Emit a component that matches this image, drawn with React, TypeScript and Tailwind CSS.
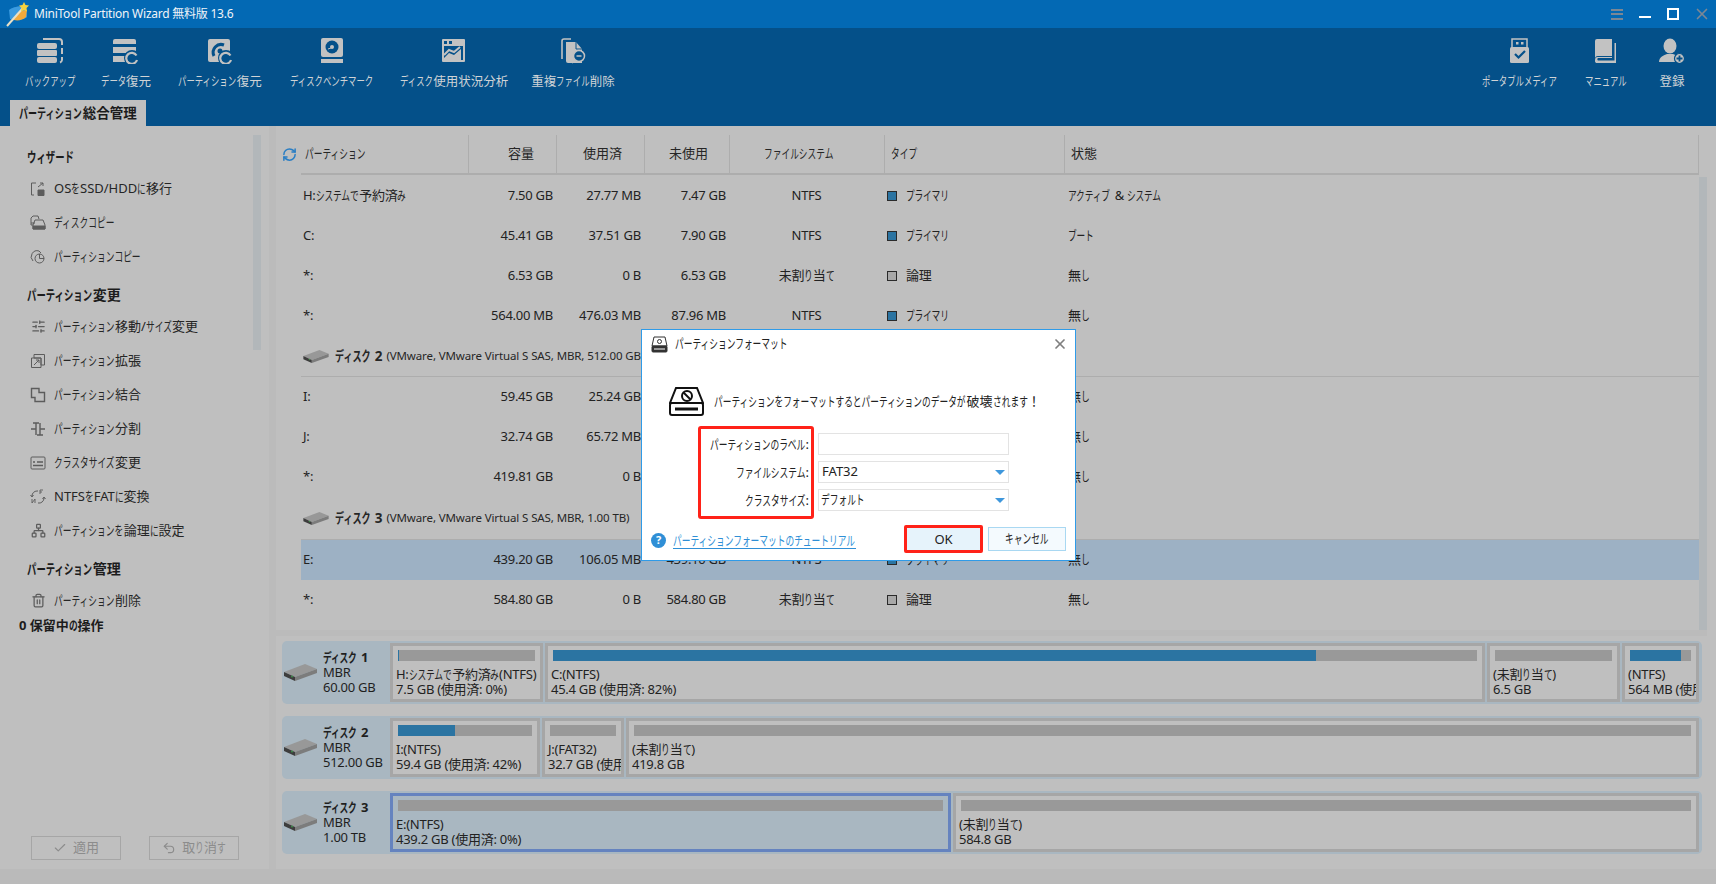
import { RefreshCw, SlidersHorizontal, Trash2, Network, Check, Undo2, X } from "lucide-react";

const cols = "grid grid-cols-[165px_88px_88px_85px_155px_180px_1fr]";

type Row = {
  name: string;
  cap: string;
  used: string;
  free: string;
  fs: string;
  type: string;
  state: string;
  selected?: boolean;
};

const rowsA: Row[] = [
  { name: "H:システムで予約済み", cap: "7.50 GB", used: "27.77 MB", free: "7.47 GB", fs: "NTFS", type: "プライマリ", state: "アクティブ & システム" },
  { name: "C:", cap: "45.41 GB", used: "37.51 GB", free: "7.90 GB", fs: "NTFS", type: "プライマリ", state: "ブート" },
  { name: "*:", cap: "6.53 GB", used: "0 B", free: "6.53 GB", fs: "未割り当て", type: "論理", state: "無し" },
  { name: "*:", cap: "564.00 MB", used: "476.03 MB", free: "87.96 MB", fs: "NTFS", type: "プライマリ", state: "無し" },
];

const rowsB: Row[] = [
  { name: "I:", cap: "59.45 GB", used: "25.24 GB", free: "34.21 GB", fs: "NTFS", type: "プライマリ", state: "無し" },
  { name: "J:", cap: "32.74 GB", used: "65.72 MB", free: "32.68 GB", fs: "FAT32", type: "プライマリ", state: "無し" },
  { name: "*:", cap: "419.81 GB", used: "0 B", free: "419.81 GB", fs: "未割り当て", type: "論理", state: "無し" },
];

const rowsC: Row[] = [
  { name: "E:", cap: "439.20 GB", used: "106.05 MB", free: "439.10 GB", fs: "NTFS", type: "プライマリ", state: "無し", selected: true },
  { name: "*:", cap: "584.80 GB", used: "0 B", free: "584.80 GB", fs: "未割り当て", type: "論理", state: "無し" },
];

const disks = [
  {
    name: "ディスク 1",
    size: "60.00 GB",
    cells: [
      { w: "w-[153px]", a: "H:システムで予約済み(NTFS)", b: "7.5 GB (使用済: 0%)", pct: 1 },
      { w: "w-[940px]", a: "C:(NTFS)", b: "45.4 GB (使用済: 82%)", pct: 82.6 },
      { w: "w-[133px]", a: "(未割り当て)", b: "6.5 GB", pct: 0 },
      { w: "w-[77px]", a: "(NTFS)", b: "564 MB (使用済: 84%)", pct: 84 },
    ],
  },
  {
    name: "ディスク 2",
    size: "512.00 GB",
    cells: [
      { w: "w-[150px]", a: "I:(NTFS)", b: "59.4 GB (使用済: 42%)", pct: 42.5 },
      { w: "w-[82px]", a: "J:(FAT32)", b: "32.7 GB (使用済: 0%)", pct: 0 },
      { w: "w-[1073px]", a: "(未割り当て)", b: "419.8 GB", pct: 0 },
    ],
  },
  {
    name: "ディスク 3",
    size: "1.00 TB",
    cells: [
      { w: "w-[561px]", a: "E:(NTFS)", b: "439.2 GB (使用済: 0%)", pct: 0, selected: true },
      { w: "w-[746px]", a: "(未割り当て)", b: "584.8 GB", pct: 0 },
    ],
  },
];

// the original UI font has narrow kana, so kana runs get squeezed to 2/3 width
function T({ s }: { s: string }) {
  return (
    <>
      {s.split(/([\u3040-\u30ff]+)/).map((run, i) =>
        i % 2 === 1 ? (
          <span
            key={i}
            className="inline-block origin-left scale-x-[0.67] whitespace-nowrap"
            style={{ width: `${run.length * 0.67}em` }}
          >
            {run}
          </span>
        ) : (
          run
        ),
      )}
    </>
  );
}

function Logo() {
  return (
    <svg width="24" height="25" viewBox="0 0 24 25">
      <path d="M3 8c3-3 12-5 17-3l1 10c-3 3-13 4-17 2z" fill="#3b9be0" />
      <path d="M8 16c2-5 8-8 13-8l-1 7c-3 3-8 4-12 3z" fill="#f3a93b" />
      <path d="M1 24L17 6" stroke="#e8e0c8" strokeWidth="2" />
      <path d="M18 0l1.500 3 3.500.5-2.500 2.500.5 3.500-3-1.500-3 1.500.5-3.500L13 3.500l3.500-.5z" fill="#f5d33f" />
    </svg>
  );
}

const g = "#c2c2c2";
const bgc = "#045089";

function BackupIcon() {
  return (
    <svg width="26" height="26" viewBox="0 0 26 26" fill={g}>
      <rect x="0" y="5" width="20" height="6" rx="2" />
      <rect x="0" y="12" width="20" height="6" rx="1" />
      <rect x="0" y="19" width="20" height="6" rx="2" />
      <path d="M6 1h16a3 3 0 0 1 3 3v3M25 10v6M25 19v3a3 3 0 0 1-2 2.500" fill="none" stroke={g} strokeWidth="2" />
    </svg>
  );
}

function RecoverC({ x, y }: { x: number; y: number }) {
  return (
    <g transform={`translate(${x} ${y})`}>
      <circle cx="6" cy="6" r="8" fill={bgc} />
      <path d="M10.500 3.500A5.500 5.500 0 1 0 11 8" fill="none" stroke={g} strokeWidth="2.200" />
    </g>
  );
}

function DataIcon() {
  return (
    <svg width="26" height="26" viewBox="0 0 26 26" fill={g}>
      <path d="M2 1h19a2 2 0 0 1 2 2v3H0V3a2 2 0 0 1 2-2z" />
      <rect x="0" y="9" width="23" height="6" />
      <path d="M0 18h12v6H0z" />
      <RecoverC x={13} y={14} />
    </svg>
  );
}

function PartRecoverIcon() {
  return (
    <svg width="26" height="26" viewBox="0 0 26 26">
      <rect x="1" y="1" width="22" height="23" rx="2" fill={g} />
      <path d="M7 18a8 8 0 0 1 10-11" fill="none" stroke={bgc} strokeWidth="3" />
      <circle cx="13" cy="13" r="2.500" fill={bgc} />
      <RecoverC x={13} y={14} />
    </svg>
  );
}

function BenchIcon() {
  return (
    <svg width="26" height="26" viewBox="0 0 26 26">
      <rect x="2" y="0" width="22" height="19" rx="2" fill={g} />
      <circle cx="13" cy="9" r="6.500" fill={bgc} />
      <circle cx="13" cy="9" r="2" fill={g} />
      <path d="M9 11l3-1" stroke={g} />
      <rect x="2" y="21" width="22" height="4" fill={g} />
    </svg>
  );
}

function UsageIcon() {
  return (
    <svg width="26" height="26" viewBox="0 0 26 26">
      <rect x="1" y="1" width="23" height="23" rx="1" fill={g} />
      <rect x="3" y="3" width="3" height="3" fill={bgc} />
      <rect x="8" y="3" width="3" height="3" fill={bgc} />
      <rect x="3" y="8" width="19" height="14" fill={bgc} />
      <path d="M3 20l5-5 5 2 7-6v11H3z" fill={g} />
      <path d="M3 17l5-5 5 2 6-5" fill="none" stroke={g} strokeWidth="2" />
    </svg>
  );
}

function DupIcon() {
  return (
    <svg width="26" height="26" viewBox="0 0 26 26">
      <path d="M2 21V3a2 2 0 0 1 2-2h7" fill="none" stroke={g} strokeWidth="1.600" />
      <path d="M6 4h10l6 7v14H8a2 2 0 0 1-2-2z" fill={g} />
      <path d="M16 4v7h6" fill="none" stroke={bgc} />
      <circle cx="19" cy="18" r="5.500" fill={bgc} stroke={g} strokeWidth="1.500" />
      <path d="M16.500 18h5M15 22l-3 3" stroke={g} strokeWidth="1.500" />
    </svg>
  );
}

function UsbIcon() {
  return (
    <svg width="26" height="26" viewBox="0 0 26 26">
      <rect x="5" y="1" width="15" height="10" fill="none" stroke={g} strokeWidth="1.500" />
      <rect x="9" y="4" width="2.500" height="2.500" fill={g} />
      <rect x="14" y="4" width="2.500" height="2.500" fill={g} />
      <rect x="3" y="9" width="19" height="16" rx="1.500" fill={g} />
      <path d="M8 16l3.500 3.500L18 13" fill="none" stroke={bgc} strokeWidth="2.200" />
    </svg>
  );
}

function BookIcon() {
  return (
    <svg width="26" height="26" viewBox="0 0 26 26">
      <path d="M2 20V3a2 2 0 0 1 2-2h15v17H5a3 3 0 0 0-3 2z" fill={g} />
      <path d="M3 25h20V5h-1.500v17.500H5a1.500 1.500 0 0 1 0-2.500h14v-1H4a3 3 0 0 0-2 3 3 3 0 0 0 1 3z" fill={g} />
    </svg>
  );
}

function UserIcon() {
  return (
    <svg width="26" height="26" viewBox="0 0 26 26">
      <ellipse cx="11" cy="8" rx="6.500" ry="7.500" fill={g} />
      <path d="M0 24c0-5 5-7 8-8h6c3 1 8 3 8 8z" fill={g} />
      <circle cx="20.500" cy="20.500" r="5" fill={g} stroke={bgc} strokeWidth="1.200" />
      <path d="M17.500 20.500h6M20.500 17.500v6" stroke={bgc} strokeWidth="1.800" />
    </svg>
  );
}

function DriveIcon({ w = 33, h = 17 }: { w?: number; h?: number }) {
  return (
    <svg className="shrink-0" width={w} height={h} viewBox="0 0 33 17">
      <path d="M0 8L21 0l12 5L11 13z" fill="#989898" />
      <path d="M0 8l11 5v4L0 12z" fill="#3d3d3d" />
      <path d="M11 13l22-8v4L11 17z" fill="#7c7c7c" />
      <circle cx="8" cy="12.500" r="1" fill="#3f8d4a" />
    </svg>
  );
}

const ic = "#5c5c5c";

function MigrateIcon() {
  return (
    <svg width="16" height="16" viewBox="0 0 16 16" fill="none" stroke={ic}>
      <path d="M6 2H1.500v12H4" />
      <path d="M8 6l5-4M10 2h3v3" />
      <path d="M8 9h6v5.500H8z" fill={ic} />
    </svg>
  );
}
function DiskCopyIcon() {
  return (
    <svg width="16" height="16" viewBox="0 0 16 16" fill="none" stroke={ic}>
      <path d="M1 8V3l2-2h5l1 3" />
      <path d="M3 10H1V8h4" />
      <path d="M5 5h8l2 5v4H3v-4z" />
      <path d="M3 11h12v3H3z" fill={ic} />
    </svg>
  );
}
function PartCopyIcon() {
  return (
    <svg width="16" height="16" viewBox="0 0 16 16" fill="none" stroke={ic}>
      <path d="M3 12A6 6 0 0 1 9 2l2 2" />
      <circle cx="9.500" cy="9.500" r="4.500" />
      <path d="M9.500 5v4.500H14" />
    </svg>
  );
}
function ExtendIcon() {
  return (
    <svg width="16" height="16" viewBox="0 0 16 16" fill="none" stroke={ic}>
      <path d="M4 1.500h10.500V12H11V5H4z" />
      <path d="M1.500 5H11v9.500H1.500z" />
      <path d="M4 12l5-5M6 7h3v3" />
    </svg>
  );
}
function MergeIcon() {
  return (
    <svg width="16" height="16" viewBox="0 0 16 16" fill="none" stroke={ic} strokeWidth="1.400">
      <path d="M1.500 1.500H9v4h5.500v9H5v-4H1.500z" />
    </svg>
  );
}
function SplitIcon() {
  return (
    <svg width="16" height="16" viewBox="0 0 16 16" fill="none" stroke={ic} strokeWidth="1.400">
      <path d="M6 2v12M10 2v12M1 8h5M10 8h5M3 2h6M7 14h6" />
    </svg>
  );
}
function ClusterIcon() {
  return (
    <svg width="16" height="16" viewBox="0 0 16 16" fill="none" stroke={ic}>
      <rect x="1" y="2" width="14" height="12" rx="1" />
      <path d="M3 10.500h10M7 7h6M3 7l2 0" strokeWidth="1.300" />
    </svg>
  );
}
function ConvertIcon() {
  return (
    <svg width="16" height="16" viewBox="0 0 16 16" fill="none" stroke={ic}>
      <path d="M2 7a5 5 0 0 1 5-5h1M8 14a5 5 0 0 0 6-5" />
      <path d="M0.500 6L2 8l1.500-2M12.500 10L14 8l1.500 2" />
      <path d="M10 1v4M10 1h3M10 3h2M2 10v4l3-4v4" strokeWidth="0.900" />
    </svg>
  );
}

function Item({ icon, label }: { icon: React.ReactNode; label: string }) {
  return (
    <div className="flex h-[34px] items-center pt-[1px] pl-[30px]">
      <span className="flex w-[16px] justify-center">{icon}</span>
      <span className="ml-[8px] text-[13px] whitespace-nowrap text-[#262626]">
        <T s={label} />
      </span>
    </div>
  );
}

function Head({ label }: { label: string }) {
  return (
    <div className="flex h-[28px] items-center pb-[1px] pl-[27px] text-[14px] font-bold text-[#1c1c1c]">
      <span>
        <T s={label} />
      </span>
    </div>
  );
}

function TableRow({ r }: { r: Row }) {
  return (
    <div className={`${cols} h-[40px] items-center pl-[2px] text-[13px] tracking-[-0.02em] text-[#222222] ${r.selected ? "bg-[#9db1c4]" : ""}`}>
      <div className="whitespace-nowrap">
        <T s={r.name} />
      </div>
      <div className="pr-[3px] text-right">{r.cap}</div>
      <div className="pr-[3px] text-right">{r.used}</div>
      <div className="pr-[3px] text-right">{r.free}</div>
      <div className="text-center">
        <T s={r.fs} />
      </div>
      <div className="flex items-center pl-[3px]">
        <span className={`h-[10px] w-[10px] border border-[#2a2a2a] ${r.type === "論理" ? "bg-[#a8a8a8]" : "bg-[#2b74a2]"}`} />
        <span className="ml-[9px]">
          <T s={r.type} />
        </span>
      </div>
      <div className="pl-[4px]">
        <T s={r.state} />
      </div>
    </div>
  );
}

function DiskRow({ d }: { d: (typeof disks)[number] }) {
  return (
    <div className="flex h-[63px] w-[1420px] rounded-[5px] bg-[#a9b7c1]">
      <div className="flex w-[108px] items-center pl-[2px]">
        <DriveIcon />
        <div className="ml-[6px] text-[13px] leading-[15px] tracking-[-0.02em] text-[#1f1f1f]">
          <div className="font-bold">
            <T s={d.name} />
          </div>
          <div>MBR</div>
          <div>{d.size}</div>
        </div>
      </div>
      <div className="flex gap-[2px] py-[2px]">
        {d.cells.map((c) => (
          <div
            key={c.a}
            className={`${c.w} overflow-hidden border-[3px] ${c.selected ? "border-[#6583bf] bg-[#a9b7c1]" : "border-[#a6a6a6] bg-[#bfbfbf]"}`}
          >
            <div className="mx-[5px] mt-[4px] h-[11px] bg-[#999999]">
              <div className="h-full bg-[#2b74a2]" style={{ width: `${c.pct}%` }} />
            </div>
            <div className="mt-[6px] pl-[3px] text-[13px] leading-[15px] tracking-[-0.02em] whitespace-nowrap text-[#222222]">
              <div>
                <T s={c.a} />
              </div>
              <div>{c.b}</div>
            </div>
          </div>
        ))}
      </div>
    </div>
  );
}

function Dialog() {
  return (
    <div className="absolute top-[329px] left-[641px] h-[232px] w-[435px] border border-[#2f9be8] bg-white text-[13px] text-[#222222]">
      <div className="flex h-[28px] items-center pr-[7px] pl-[9px]">
        <svg width="17" height="17" viewBox="0 0 17 17" fill="none" stroke="#333">
          <path d="M3 1h11l2 9H1z" />
          <circle cx="8.500" cy="5.500" r="2" />
          <rect x="1" y="10" width="15" height="6" rx="1" fill="#333" />
          <path d="M3 13h11" stroke="#fff" />
        </svg>
        <span className="ml-[7px]">
          <T s="パーティションフォーマット" />
        </span>
        <X className="ml-auto text-[#7f7f7f]" size={16} strokeWidth={2.6} />
      </div>
      <div className="mt-[29px] flex h-[29px] items-center pl-[27px]">
        <svg className="shrink-0" width="35" height="29" viewBox="0 0 35 29" fill="none" stroke="#111" strokeWidth="2">
          <path d="M7 1h21l6 15H1z" fill="#fff" />
          <rect x="1" y="16" width="33" height="12" rx="2" fill="#fff" />
          <path d="M6 22h23" strokeWidth="3" />
          <circle cx="18" cy="9" r="5" />
          <path d="M14.500 5.500l7 7" />
        </svg>
        <span className="ml-[10px] whitespace-nowrap">
          <T s="パーティションをフォーマットするとパーティションのデータが破壊されます！" />
        </span>
      </div>
      <div className="mt-[10px] ml-[56px] flex">
        <div className="flex h-[93px] w-[116px] flex-col items-end rounded-[3px] border-[3px] border-[#ff2218] pt-[2px] pr-[2px]">
          <div className="flex h-[28px] items-center whitespace-nowrap">
            <span>
              <T s="パーティションのラベル:" />
            </span>
          </div>
          <div className="flex h-[28px] items-center whitespace-nowrap">
            <span>
              <T s="ファイルシステム:" />
            </span>
          </div>
          <div className="flex h-[28px] items-center whitespace-nowrap">
            <span>
              <T s="クラスタサイズ:" />
            </span>
          </div>
        </div>
        <div className="ml-[4px] flex flex-col gap-[6px] pt-[7px]">
          <div className="h-[22px] w-[191px] border border-[#e3e3e3]" />
          <div className="flex h-[22px] w-[191px] items-center border border-[#e3e3e3] pr-[3px] pl-[3px]">
            FAT32
            <span className="mt-[1px] ml-auto h-0 w-0 border-x-[5px] border-t-[5px] border-x-transparent border-t-[#3f97dc]" />
          </div>
          <div className="flex h-[22px] w-[191px] items-center border border-[#e3e3e3] pr-[3px] pl-[2px]">
            <span>
              <T s="デフォルト" />
            </span>
            <span className="mt-[1px] ml-auto h-0 w-0 border-x-[5px] border-t-[5px] border-x-transparent border-t-[#3f97dc]" />
          </div>
        </div>
      </div>
      <div className="mt-[6px] flex h-[28px] items-center pl-[9px]">
        <span className="mt-[2px] flex h-[15px] w-[15px] items-center justify-center rounded-full bg-[#2f8fd6] text-[11px] font-bold text-white">?</span>
        <span className="mt-[2px] ml-[7px] border-b border-[#2f8fd6] leading-[16px] whitespace-nowrap text-[#2f8fd6]">
          <T s="パーティションフォーマットのチュートリアル" />
        </span>
        <div className="ml-auto flex h-[28px] w-[79px] items-center justify-center rounded-[2px] border-[3px] border-[#ff2218] bg-[#e6f3fb] pt-[1px]">OK</div>
        <div className="mr-[9px] ml-[5px] flex h-[24px] w-[78px] items-center justify-center border border-[#a9d8f2] bg-[#f4fafe]">
          <span>
            <T s="キャンセル" />
          </span>
        </div>
      </div>
    </div>
  );
}

function ToolItem({ w, icon, label }: { w: string; icon: React.ReactNode; label: string }) {
  return (
    <div className={`${w} flex flex-col items-center pt-[10px]`}>
      <div className="flex h-[26px] items-center justify-center">{icon}</div>
      <div className="mt-[8px] h-[20px] text-[12.5px] leading-[20px] whitespace-nowrap text-[#cfd3d6]">
        <T s={label} />
      </div>
    </div>
  );
}

export default function App() {
  return (
    <div className="relative flex h-[884px] w-[1716px] flex-col overflow-hidden bg-[#bfbfbf] font-['Noto_Sans','Noto_Sans_CJK_JP',sans-serif]">
      {/* title bar */}
      <div className="flex h-[28px] items-center bg-[#0369b4] pl-[6px] text-[#f0f4f8]">
        <Logo />
        <span className="ml-[4px] text-[12px] tracking-[-0.02em]">MiniTool Partition Wizard 無料版 13.6</span>
        <div className="ml-auto flex items-center pr-[5px]">
          <span className="flex h-[11px] w-[12px] flex-col justify-between">
            <span className="h-[2px] bg-[#7b8794]" />
            <span className="h-[2px] bg-[#7b8794]" />
            <span className="h-[2px] bg-[#7b8794]" />
          </span>
          <span className="mt-[6px] ml-[16px] h-[2px] w-[12px] bg-white" />
          <span className="ml-[16px] h-[12px] w-[12px] border-2 border-white" />
          <X className="ml-[14px] text-[#7b8794]" size={18} strokeWidth={2.2} />
        </div>
      </div>

      {/* toolbar */}
      <div className="flex h-[98px] flex-col bg-[#045089]">
        <div className="flex h-[72px] pl-[10px]">
          <ToolItem w="w-[80px]" icon={<BackupIcon />} label="バックアップ" />
          <ToolItem w="w-[72px]" icon={<DataIcon />} label="データ復元" />
          <ToolItem w="w-[116px]" icon={<PartRecoverIcon />} label="パーティション復元" />
          <ToolItem w="w-[108px]" icon={<BenchIcon />} label="ディスクベンチマーク" />
          <ToolItem w="w-[136px]" icon={<UsageIcon />} label="ディスク使用状況分析" />
          <ToolItem w="w-[102px]" icon={<DupIcon />} label="重複ファイル削除" />
          <div className="ml-auto flex pr-[16px]">
            <ToolItem w="w-[96px]" icon={<UsbIcon />} label="ポータブルメディア" />
            <ToolItem w="w-[76px]" icon={<BookIcon />} label="マニュアル" />
            <ToolItem w="w-[56px]" icon={<UserIcon />} label="登録" />
          </div>
        </div>
        <div className="mt-auto ml-[10px] flex h-[26px] w-[136px] items-center justify-center bg-[#bfbfbf] text-[13.5px] font-bold text-[#1c1c1c]">
          <span>
            <T s="パーティション総合管理" />
          </span>
        </div>
      </div>

      {/* body */}
      <div className="flex flex-1">
        <div className="flex w-[269px]">
          <div className="flex w-[253px] flex-col pt-[17px]">
            <Head label="ウィザード" />
            <Item icon={<MigrateIcon />} label="OSをSSD/HDDに移行" />
            <Item icon={<DiskCopyIcon />} label="ディスクコピー" />
            <Item icon={<PartCopyIcon />} label="パーティションコピー" />
            <div className="mt-[8px]">
              <Head label="パーティション変更" />
            </div>
            <Item icon={<SlidersHorizontal size={15} color={ic} />} label="パーティション移動/サイズ変更" />
            <Item icon={<ExtendIcon />} label="パーティション拡張" />
            <Item icon={<MergeIcon />} label="パーティション結合" />
            <Item icon={<SplitIcon />} label="パーティション分割" />
            <Item icon={<ClusterIcon />} label="クラスタサイズ変更" />
            <Item icon={<ConvertIcon />} label="NTFSをFATに変換" />
            <Item icon={<Network size={15} color={ic} />} label="パーティションを論理に設定" />
            <div className="mt-[8px]">
              <Head label="パーティション管理" />
            </div>
            <Item icon={<Trash2 size={15} color={ic} />} label="パーティション削除" />
            <div className="flex h-[16px] items-center pt-[1px] pl-[19px] text-[13px] font-bold text-[#1c1c1c]">
              <span>
                0 <T s="保留中の操作" />
              </span>
            </div>
            <div className="mt-auto mb-[9px] flex gap-[28px] pl-[31px] text-[13px] text-[#8c8c8c]">
              <div className="flex h-[24px] w-[90px] items-center justify-center border border-[#a6a6a6]">
                <Check size={14} className="mr-[6px]" />
                適用
              </div>
              <div className="flex h-[24px] w-[90px] items-center justify-center border border-[#a6a6a6]">
                <Undo2 size={14} className="mr-[6px]" />
                <span>
                  <T s="取り消す" />
                </span>
              </div>
            </div>
          </div>
          <div className="mt-[9px] h-[215px] w-[8px] bg-[#b2b7ba]" />
        </div>
        <div className="w-[7px] bg-[#bbbbbb]" />

        <div className="flex flex-1 flex-col">
          {/* partition table */}
          <div className="flex h-[504px]">
            <div className="flex w-[25px] justify-center pt-[21px] pl-[1px]">
              <RefreshCw size={15} strokeWidth={2.4} color="#2a7ec4" />
            </div>
            <div className="w-[1398px] pt-[9px]">
              <div className={`${cols} h-[40px] border-r border-b-2 border-[#adadad] pl-[2px] text-[13px] text-[#262626]`}>
                <div className="flex items-center pl-[2px]">
                  <span>
                    <T s="パーティション" />
                  </span>
                </div>
                <div className="flex items-center justify-end border-l border-[#adadad] pr-[22px]">容量</div>
                <div className="flex items-center justify-end border-l border-[#adadad] pr-[22px]">使用済</div>
                <div className="flex items-center justify-end border-l border-[#adadad] pr-[21px]">未使用</div>
                <div className="flex items-center justify-center border-l border-[#adadad] pr-[16px]">
                  <span>
                    <T s="ファイルシステム" />
                  </span>
                </div>
                <div className="flex items-center border-l border-[#adadad] pl-[6px]">
                  <span>
                    <T s="タイプ" />
                  </span>
                </div>
                <div className="flex items-center border-l border-[#adadad] pl-[6px]">状態</div>
              </div>
              <div className="pt-[1px]">
                {rowsA.map((r, i) => (
                  <TableRow key={i} r={r} />
                ))}
                <div className="flex h-[41px] items-center border-b border-[#adadad] pl-[2px] text-[#262626]">
                  <DriveIcon w={26} h={13} />
                  <span className="ml-[6px] text-[13.5px] font-bold">
                    <T s="ディスク 2" />
                  </span>
                  <span className="ml-[4px] text-[11.5px] tracking-[-0.01em]">(VMware, VMware Virtual S SAS, MBR, 512.00 GB)</span>
                </div>
                {rowsB.map((r, i) => (
                  <TableRow key={i} r={r} />
                ))}
                <div className="flex h-[43px] items-center border-b border-[#adadad] pl-[2px] text-[#262626]">
                  <DriveIcon w={26} h={13} />
                  <span className="ml-[6px] text-[13.5px] font-bold">
                    <T s="ディスク 3" />
                  </span>
                  <span className="ml-[4px] text-[11.5px] tracking-[-0.01em]">(VMware, VMware Virtual S SAS, MBR, 1.00 TB)</span>
                </div>
                {rowsC.map((r, i) => (
                  <TableRow key={i} r={r} />
                ))}
              </div>
            </div>
            <div className="mt-[51px] w-[8px] bg-[#b2b7ba]" />
          </div>
          <div className="h-[6px] w-[1431px] bg-[#bbbbbb]" />
          {/* disk map */}
          <div className="flex flex-col gap-[12px] pt-[5px] pl-[6px]">
            {disks.map((d) => (
              <DiskRow key={d.name} d={d} />
            ))}
          </div>
        </div>
      </div>
      <div className="h-[15px] shrink-0 bg-[#bababa]" />

      <Dialog />
    </div>
  );
}
